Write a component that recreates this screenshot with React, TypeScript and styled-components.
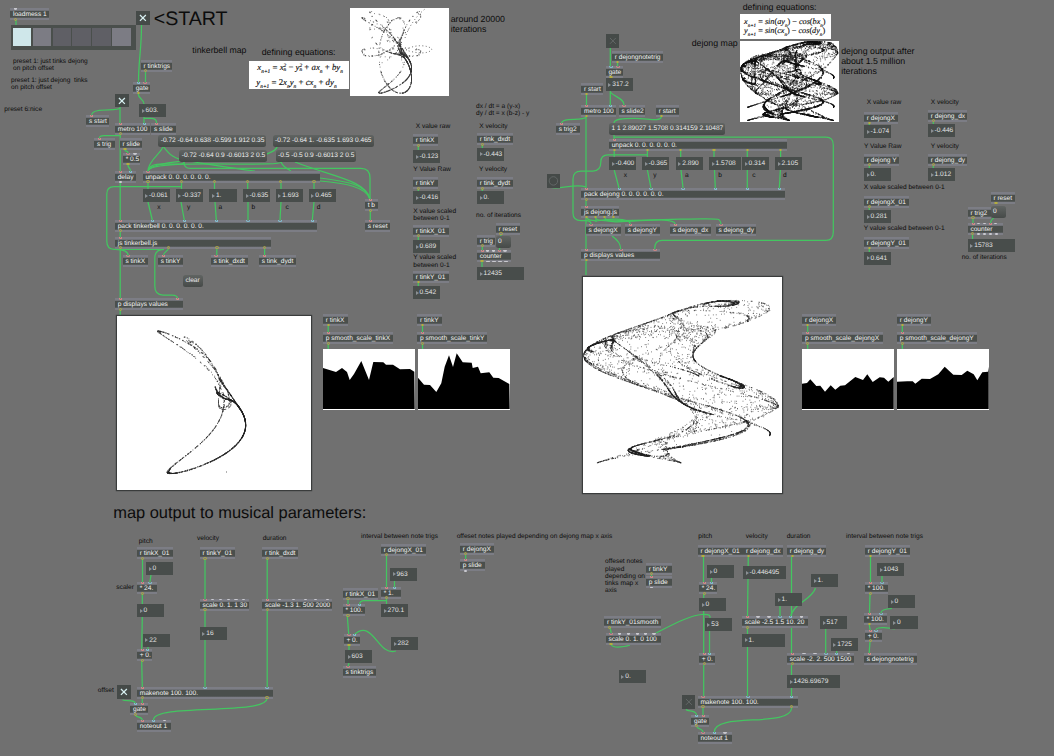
import React from "react";
import styled, { createGlobalStyle } from "styled-components";

const GlobalStyle = createGlobalStyle`
  html, body { margin: 0; padding: 0; background: #707070; }
  body { overflow: hidden; }
  * { box-sizing: border-box; }
`;

/* ---------- parts of the patcher ---------- */

const Patcher = styled.main`
  position: relative;
  width: 1054px;
  height: 756px;
  overflow: hidden;
  background: #707070;
  font-family: "Liberation Sans", Arial, sans-serif;
  font-size: 6.6px;
  text-rendering: geometricPrecision;
  white-space: pre;
`;

const Cables = styled.svg`
  position: absolute;
  inset: 0;
  fill: none;
  stroke: #43c660;
  stroke-width: 1.25;
`;

type Place = { $x: number; $y: number; $w?: number };

const ObjectBox = styled.div<Place>`
  position: absolute;
  left: ${(p) => p.$x}px;
  top: ${(p) => p.$y}px;
  width: ${(p) => p.$w}px;
  height: 12px;
  padding-left: 2.7px;
  line-height: 13.2px;
  color: #f2f2f2;
  background: linear-gradient(#7c7d85 0 2.4px, #4a4f4c 2.8px 9.4px, #7c7d85 9.8px);
`;

const portColors: Record<string, string> = {
  r: "#d98a86",
  b: "#84c4d6",
  w: "#c9c9cf",
  y: "#b4ad3e",
};

const Port = styled.i<{ $dx: number; $kind: string; $out?: boolean }>`
  position: absolute;
  left: ${(p) => p.$dx - 1.6}px;
  ${(p) => (p.$out ? "bottom: -0.4px;" : "top: 0;")}
  width: 3.2px;
  height: ${(p) => (p.$kind === "w" ? 1.6 : p.$out ? 2.8 : 2)}px;
  border: ${(p) => (p.$kind === "w" ? "none" : `0.9px solid ${portColors[p.$kind]}`)};
  background: ${(p) => (p.$kind === "w" ? portColors.w : "transparent")};
  border-radius: ${(p) => (p.$out ? "2px" : "0 0 2px 2px")};
  ${(p) => (!p.$out && p.$kind !== "w" ? "border-top: none;" : "")}
`;

const NumberBox = styled.div<Place>`
  position: absolute;
  left: ${(p) => p.$x}px;
  top: ${(p) => p.$y}px;
  width: ${(p) => p.$w}px;
  height: 13px;
  display: flex;
  align-items: center;
  gap: 1px;
  padding-left: 2.6px;
  color: #e4e4e4;
  background: #484d4b;
`;

const Arrow = styled.span`
  width: 0;
  height: 0;
  border: 2.2px solid transparent;
  border-left: 3px solid #8b9094;
  border-right: 0;
`;

const MessageBox = styled.div<Place>`
  position: absolute;
  left: ${(p) => p.$x}px;
  top: ${(p) => p.$y}px;
  width: ${(p) => p.$w}px;
  height: 12px;
  padding-left: 2.4px;
  line-height: 12px;
  color: #f0f0f0;
  border-radius: 2.5px;
  background: linear-gradient(#606462, #464a48);
`;

const Comment = styled.div<Place & { $size: number; $lh: number }>`
  position: absolute;
  left: ${(p) => p.$x}px;
  top: ${(p) => p.$y - p.$lh / 2}px;
  font-size: ${(p) => p.$size}px;
  line-height: ${(p) => p.$lh}px;
  color: #0c0c0c;
`;

const ToggleBox = styled.div<Place & { $on?: boolean }>`
  position: absolute;
  left: ${(p) => p.$x}px;
  top: ${(p) => p.$y}px;
  width: 13.8px;
  height: 13.8px;
  background: #454a48;
  svg {
    display: block;
    width: 100%;
    height: 100%;
    fill: none;
    stroke: ${(p) => (p.$on ? "#d8f0f2" : "#626766")};
    stroke-width: ${(p) => (p.$on ? 1.3 : 1)};
  }
`;

const PresetPanel = styled.div`
  position: absolute;
  left: 10.6px;
  top: 25px;
  width: 125.4px;
  height: 24.5px;
  display: flex;
  gap: 1.4px;
  padding: 2.5px 2.2px;
  background: #4a4f4c;
`;

const PresetCell = styled.span<{ $c: string }>`
  width: 18.5px;
  height: 18.8px;
  background: ${(p) => p.$c};
`;

const Screen = styled.div<Place & { $h: number; $frame?: boolean }>`
  position: absolute;
  left: ${(p) => p.$x}px;
  top: ${(p) => p.$y}px;
  width: ${(p) => p.$w}px;
  height: ${(p) => p.$h}px;
  background: #fff;
  box-shadow: ${(p) => (p.$frame ? "0 0 0 1.2px #3a3c3c" : "none")};
  svg { display: block; }
`;

const Formula = styled.div<Place & { $h: number; $size: number; $gap: number }>`
  position: absolute;
  left: ${(p) => p.$x}px;
  top: ${(p) => p.$y}px;
  width: ${(p) => p.$w}px;
  height: ${(p) => p.$h}px;
  display: flex;
  flex-direction: column;
  justify-content: center;
  gap: ${(p) => p.$gap}px;
  background: #fff;
  color: #111;
  font-family: "Liberation Serif", "Times New Roman", serif;
  font-style: italic;
  font-size: ${(p) => p.$size}px;
  line-height: 1;
  -webkit-text-stroke: 0.15px #111;
  sub { font-size: 0.62em; line-height: 0; }
  b { font-weight: normal; font-style: normal; }
`;

const FormulaLine = styled.div<{ $x: number }>`
  height: 1em;
  padding-left: ${(p) => p.$x}px;
`;

const Power = styled.span`
  display: inline-grid;
  height: 1em;
  font-size: 0.6em;
  line-height: 0.9;
  vertical-align: 0.7em;
`;

/* ---------- patch data ---------- */

type Obj = [number, number, number, string, string?, string?];

const objects: Obj[] = [
  [10.3, 8.3, 38.7, "loadmess 1", "w5.5", "y5.5"],
  [140.7, 59.7, 31.3, "r tinktrigs", "", "y5"],
  [133, 82, 17, "gate", "b5.3 r12", "y5.3"],
  [86.3, 114.7, 22.7, "s start", "r5.3"],
  [115, 122.7, 35, "metro 100", "r5.3 b29.3", "y5.3"],
  [151.3, 122.7, 25, "s slide", "r5.3"],
  [94.3, 137.5, 20.7, "s trig", "r5"],
  [119.7, 138, 22.3, "r slide", "", "y5.3"],
  [123, 153, 17, "* 0.5", "r5 w12", "y5"],
  [115, 170.7, 20.7, "delay", "r5.3 b15.5", "w5.3"],
  [142.7, 170.7, 177.5, "unpack 0. 0. 0. 0. 0. 0.", "r5.3", "y5.3 y38.7 y71.8 y104.8 y138 y171.3"],
  [115, 219.7, 202, "pack tinkerbell 0. 0. 0. 0. 0. 0.", "r5.3 b37.3 b69.3 b101.3 b133 b165 b197.3", "y5.3"],
  [115, 236.5, 156, "js tinkerbell.js", "r5.3", "y5.3 y53.7 y102 y149.7"],
  [122.7, 255.3, 25, "s tinkX", "r5.3"],
  [158, 255.3, 25, "s tinkY", "r5.3"],
  [210.7, 255.3, 37, "s tink_dxdt", "r5.3"],
  [259, 255.3, 37, "s tink_dydt", "r5.3"],
  [115, 298.2, 68, "p displays values", "r5.3 r62.7", "y5.3"],
  [365, 199.3, 13, "t b", "r5.3", "y5.3"],
  [365, 220, 25, "s reset", "r5.3"],
  [413, 134.2, 25, "r tinkX", "", "y5.3"],
  [477, 133.2, 36, "r tink_dxdt", "", "y5.3"],
  [413, 177.2, 25, "r tinkY", "", "y5.3"],
  [477, 177.2, 36, "r tink_dydt", "", "y5.3"],
  [413, 224.7, 36, "r tinkX_01", "", "y5.3"],
  [413, 271, 36, "r tinkY_01", "", "y5.3"],
  [495.7, 222.7, 24, "r reset", "", "y5.3"],
  [477, 234.7, 17.5, "r trig", "", "y5.3"],
  [477, 250, 34, "counter", "r5.7 w10.5 w16.5 r22.5 w28", "y5 w11 w17 w23 w29"],
  [612, 51, 51, "r dejongnotetrig", "", "y5.3"],
  [605.7, 66, 17, "gate", "b5.3 r12.3", "y5.3"],
  [581.3, 83, 22, "r start", "", "y5.3"],
  [581.3, 105, 35, "metro 100", "r5.3 b29.3", "y5.3"],
  [618.7, 105, 26.7, "s slide2", "r5.3"],
  [656, 105, 23, "r start", "", "y5.3"],
  [556, 123.3, 24, "s trig2", "r5.3"],
  [609, 139, 178, "unpack 0. 0. 0. 0. 0. 0.", "r5.3", "y5.3 y38.5 y71.8 y105 y138.3 y171.7"],
  [581.3, 188.3, 203.3, "pack dejong 0. 0. 0. 0. 0. 0.", "r5.3 b38 b69.7 b101.7 b134 b166 b198", "y5.3"],
  [581.3, 206, 37.3, "js dejong.js", "r5.3", "y5.3 y14.4 y23.5 y32.6"],
  [585.7, 223.7, 35, "s dejongX", "r5.3"],
  [625, 223.7, 35, "s dejongY", "r5.3"],
  [670, 223.7, 40.5, "s dejong_dx", "r5.3"],
  [715.7, 223.7, 40, "s dejong_dy", "r5.3"],
  [581.3, 249, 79, "p displays values", "r5.3 r39.7 r73.7", "y5.3"],
  [864, 112, 34, "r dejongX", "", "y5.3"],
  [928, 109.5, 38.7, "r dejong_dx", "", "y5.3"],
  [864, 153.7, 35, "r dejong Y", "", "y5.3"],
  [928, 153.7, 38.7, "r dejong_dy", "", "y5.3"],
  [864, 195.5, 45, "r dejongX_01", "", "y5.3"],
  [864, 237, 45, "r dejongY_01", "", "y5.3"],
  [990.7, 192, 24, "r reset", "", "y5.3"],
  [967.7, 206.5, 23, "r trig2", "", "y5.3"],
  [967.7, 222.7, 35, "counter", "r5.7 w10.5 w16.5 r22.5 w28", "y5 w11 w17 w23 w29"],
  [323, 314, 25, "r tinkX", "", "y5.3"],
  [323, 332.3, 70, "p smooth_scale_tinkX", "r5.3", "y5.3"],
  [417.3, 314, 25, "r tinkY", "", "y5.3"],
  [417.3, 332.3, 70, "p smooth_scale_tinkY", "r5.3", "y5.3"],
  [802.3, 314, 34, "r dejongX", "", "y5.3"],
  [802.3, 332.3, 81, "p smooth_scale_dejongX", "r5.3", "y5.3"],
  [897, 314, 34, "r dejongY", "", "y5.3"],
  [897, 332.3, 80, "p smooth_scale_dejongY", "r5.3", "y5.3"],
  [137, 547.2, 36, "r tinkX_01", "", "y5.3"],
  [199.7, 547.2, 35, "r tinkY_01", "", "y5.3"],
  [262.3, 547.2, 36, "r tink_dxdt", "", "y5.3"],
  [137, 582.4, 19.7, "* 24.", "r5.3 b13", "y5.3"],
  [137, 649.4, 15, "+ 0.", "r5.3 b10.7", "y5.3"],
  [199.7, 598.8, 49, "scale 0. 1. 1 30", "r5.3 w13 w21 w28.5 w36.3 w44", "y5.3"],
  [262.3, 598.8, 70, "scale -1.3 1. 500 2000", "r5.3 w17.4 w31 w43 w53 w65", "y5.3"],
  [137, 686.8, 136, "makenote 100. 100.", "r5.3 b68 b130", "y5.3 y130"],
  [130.3, 703.3, 17.3, "gate", "b5.3 r12.4", "y5.3"],
  [137, 719.6, 33.7, "noteout 1", "r5.3 b16.6 w27.4", ""],
  [381, 543.6, 45, "r dejongX_01", "", "y5.3"],
  [381, 586.8, 19.7, "* 1.", "r5.3 b13.8", "y5.3"],
  [342.7, 587.8, 35, "r tinkX_01", "", "y5.3"],
  [342.7, 604.2, 22.7, "* 100.", "r5.3 b17", "y5.3"],
  [343.7, 634, 16.3, "+ 0.", "r5.3 b10.7", "y5.3"],
  [342.7, 665.9, 33, "s tinktrigs", "r5.3", ""],
  [460, 542.8, 34, "r dejongX", "", "y5.3"],
  [460, 559.3, 25.3, "p slide", "r5.3", "w5.3"],
  [646, 562.6, 25.5, "r tinkY", "", "y5.3"],
  [646, 575.8, 25.5, "p slide", "r5.3", "w5.3"],
  [604.3, 616.4, 57, "r tinkY_01smooth", "", "y5.3"],
  [605.7, 633, 55, "scale 0. 1. 0 100", "r5.3 w14 w22.7 w31.5 w40 w48.3", "y5.3"],
  [697.7, 545, 46, "r dejongX_01", "", "y5.3"],
  [743.3, 545, 39.3, "r dejong_dx", "", "y5.3"],
  [787, 545, 38.7, "r dejong_dy", "", "y5.3"],
  [865, 545, 45, "r dejongY_01", "", "y5.3"],
  [699, 582.3, 18, "* 24.", "r5.3 b12.7", "y5.3"],
  [699, 652.8, 15.7, "+ 0.", "r5.3 b10.7", "y5.3"],
  [742, 616.3, 66, "scale -2.5 1.5 10. 20", "r5.3 w16 w27 b38 b48.7 w59.3", "y5.3"],
  [787, 652.8, 67, "scale -2. 2. 500 1500", "r5.3 w17 w28 b39 b49.7 w61.5", "y5.3"],
  [865, 582.3, 23, "* 100.", "r5.3 b17", "y5.3"],
  [864, 613, 23, "* 100.", "r5.3 b17", "y5.3"],
  [865, 629.6, 16.7, "+ 0.", "r5.3 b11", "y5.3"],
  [864, 652.8, 52.7, "s dejongnotetrig", "r5.3", ""],
  [697.7, 695.9, 100, "makenote 100. 100.", "r5.3 b50.3 b94", "y5.3 y94"],
  [691.3, 714.5, 17.5, "gate", "b5.3 r12.4", "y5.3"],
  [697.7, 732, 34, "noteout 1", "r5.3 b16.6 w27.4", ""],
];

const numbers: [number, number, string, number?][] = [
  [139, 104.3, "603."],
  [142.5, 189, "-0.061"], [175.7, 189, "-0.337"], [209.3, 189, "1."],
  [243, 189, "-0.635"], [275.7, 189, "1.693"], [308.7, 189, "0.465"],
  [413, 150, "-0.123"], [477, 147.6, "-0.443"], [413, 191.4, "-0.416"], [477, 191.4, "0."],
  [413, 240, "0.689"], [413, 286, "0.542"], [477, 267, "12435", 47],
  [605.7, 78.3, "317.2"],
  [609, 157.2, "-0.400"], [642, 157.2, "-0.365"], [675.7, 157.2, "2.890"],
  [709, 157.2, "1.5708", 31.5], [742, 157.2, "0.314"], [775, 157.2, "2.105"],
  [864, 125.4, "-1.074"], [928, 124, "-0.446"], [864, 168, "0."], [928, 168, "1.012"],
  [864, 210, "0.281"], [864, 251.8, "0.641"], [967.7, 239, "15783", 47],
  [146, 562, "0"], [137, 604, "0"], [142.7, 633.7, "22"], [199.7, 627, "16"],
  [390, 567.5, "963"], [381, 604, "270.1"], [391, 637, "282"], [345, 650, "603"],
  [618.7, 670, "0."],
  [707, 565, "0"], [743, 566, "-0.446495", 43], [877, 563, "1043"], [699, 598, "0"],
  [811, 574, "1."], [775, 593, "1."], [704.7, 618, "53"], [742, 633.7, "1.", 43],
  [820, 616, "517"], [830.7, 638, "1725"], [787, 675.3, "1426.69679", 53],
  [888, 595.3, "0"], [890.3, 616, "0"],
];

const messages: [number, number, number, string][] = [
  [158.3, 134.7, 108, "-0.72 -0.64 0.638 -0.599 1.912 0.35"],
  [272.7, 134.7, 101, "-0.72 -0.64 1. -0.635 1.693 0.465"],
  [179.3, 150.3, 88, "-0.72 -0.64 0.9 -0.6013 2 0.5"],
  [275.7, 150.3, 80.3, "-0.5 -0.5 0.9 -0.6013 2 0.5"],
  [183, 275.3, 19.7, "clear"],
  [495.7, 235.8, 15, "0"],
  [609, 122.7, 116.3, "1 1 2.89027 1.5708 0.314159 2.10487"],
  [990.7, 206.4, 15.3, "0"],
];

/* x, centre of the first line, text, font size, line height */
const comments: [number, number, string, number?, number?][] = [
  [13, 61.3, "preset 1: just tinks dejong\non pitch offset"],
  [11, 80.2, "preset 1: just dejong  tinks\non pitch offset"],
  [4.3, 109.6, "preset 6:nice"],
  [153.7, 19.3, "<START", 19.6, 22],
  [192.3, 50, "tinkerbell map", 8.7, 10],
  [261.7, 52, "defining equations:", 8.8, 10],
  [450.7, 19.2, "around 20000\niterations", 8.8, 10],
  [476, 106.3, "dx / dt = a (y-x)\ndy / dt = x (b-z) - y"],
  [415.7, 126.2, "X value raw"], [479.3, 126.2, "X velocity"],
  [413.3, 169.2, "Y Value Raw"], [479, 169.2, "Y velocity"],
  [413.3, 211.8, "X value scaled\nbetween 0-1"],
  [476, 215.3, "no. of iterations"],
  [413.3, 258, "Y value scaled\nbetween 0-1"],
  [157.3, 207.5, "x"], [187, 207.5, "y"], [218.5, 207.5, "a"], [251.5, 207.5, "b"], [285.5, 207.5, "c"], [316.7, 207.5, "d"],
  [742.7, 7, "defining equations:", 8.8, 10],
  [691.7, 42.5, "dejong map", 8.8, 10],
  [841.2, 51.2, "dejong output after\nabout 1.5 million\niterations", 8.8, 10],
  [623.7, 175.7, "x"], [653.3, 175.7, "y"], [685, 175.7, "a"], [718.2, 175.7, "b"], [752.2, 175.7, "c"], [783, 175.7, "d"],
  [866.7, 102.2, "X value raw"], [930.7, 102.2, "X velocity"],
  [864, 146.2, "Y Value Raw"], [930.7, 146.2, "Y velocity"],
  [863.7, 188, "X value scaled between 0-1"],
  [863.7, 228.5, "Y value scaled between 0-1"],
  [961.7, 257.4, "no. of iterations"],
  [113.2, 513, "map output to musical parameters:", 16.45, 20],
  [138.7, 542, "pitch"], [197, 538.8, "velocity"], [262.7, 538.8, "duration"],
  [116.3, 587.2, "scaler"], [97.8, 690.5, "offset"],
  [361, 536.3, "interval between note trigs"],
  [456.7, 536.3, "offeset notes played depending on dejong map x axis"],
  [605, 562, "offeset notes\nplayed\ndepending on\ntinks map x\naxis"],
  [698.3, 536.3, "pitch"], [745.7, 536.3, "velocity"], [786.7, 536.3, "duration"],
  [846, 536.3, "interval between note trigs"],
];

const cables = [
  "M16 20V25",
  "M141.5 25C141.5 50 138.5 60 138.5 82", "M145.5 71.5V82",
  "M138.3 94C138.3 99 144 99 144 104", "M144 117V123", "M144 118.3H151Q156.6 118.3 156.6 123",
  "M120 107V123", "M120 108C118 112 92 107 91.7 115",
  "M120.2 134V299", "M120 135.7H104Q99.4 135.7 99.4 138",
  "M125 150C125 152 128 150 128 153", "M128 165C128 168 130.5 168 130.5 171",
  "M163 146C163 152 148 160 148 171", "M163 146C172 158 176 158 182 160C220 166 230 168 255 171",
  "M320 178C345 181 366 184 370 199", "M320 181C345 183 366 187 370 199",
  "M184 162C184 168 150 158 148 171", "M184 162Q184 168.4 190 168.4H361Q370 168.4 370 178V200",
  "M277.5 146C276 152 268 153 262 156C230 160 152 158 148 171",
  "M281 162C281 168 150 158 148 171", "M281 162C283 167 287 169 291 171",
  "M295 162C330 176 366 180 370 199",
  "M148 182V189", "M181.5 182V189", "M214.5 182V189", "M247.7 182V189", "M281 182V189", "M314 182V189",
  "M148 202L152.3 220", "M181 202L184.3 220", "M215 202L216.3 220", "M248 202V220", "M281 202L280 220", "M314 202L312.3 220",
  "M181.5 186.7H114Q106.8 186.7 106.8 194V241Q106.8 249.3 114 249.3H164",
  "M115 249.3C123 249.3 128.3 251 128.3 256",
  "M168.7 248C168 252 163.3 251 163.3 256",
  "M164 249.3Q154.8 249.3 154.8 258V286Q154.8 295 163 295H172Q177.7 295 177.7 299",
  "M216.8 248V256", "M264.6 248V256", "M120.2 310V315", "M370.3 211V221",
  "M418.3 146V150", "M482.3 145V148", "M418.3 189V192", "M482.3 189V192", "M418.3 236V240", "M418.3 283V286",
  "M482.3 246V250", "M482 262V267", "M501 234L499.5 250",
  "M610.3 48V66", "M617.5 63V66", "M610.5 78V79", "M610.3 91V105", "M610.3 92C614 97 624 98 624 105",
  "M586.5 95V105", "M586.3 117C582 122 561.5 116 561.3 124", "M586 117V275",
  "M551 187.5C560 190 575 183 586 187",
  "M661.3 117C660 122 648 118.3 635 118.3S614 119 614 123",
  "M614 134.7V139", "M614 137H826Q833.3 137 833.3 145V232Q833.3 240.4 826 240.4H662Q654.6 240.4 654.6 249",
  "M614.2 151V157", "M647.4 151V157", "M680.7 151V157", "M714 151V157", "M747.3 151V157", "M780.6 151V157",
  "M614.2 170L619 188", "M647.4 170L651 188", "M681 170L683 188", "M714.5 170L715.3 188", "M747.3 170V188", "M780.4 170L779.3 188",
  "M647.4 154.8H608Q600.8 154.8 600.8 162Q600.8 171 593 171H581Q573 171 573 179V213Q573 220.6 581 220.6H586Q591 220.6 591 224",
  "M587 218C588 221 593 220 596 221C606 219 629 217 630.5 224",
  "M595.7 218C597 226 674 214 675.3 224", "M605 218C607 226 640 219 680 219S720 217 721 224",
  "M596 218V222", "M612 236Q620.7 242 620.7 249",
  "M869.3 123V126", "M933.3 121V124", "M869.3 165V168", "M933.3 165V168", "M869.3 207V210", "M869.3 249V252",
  "M973 218V223", "M972.5 234V239", "M995.5 217Q991 219 990.5 223",
  "M328.2 325V333", "M328.2 343V349", "M422.5 325V333", "M422.5 343V349",
  "M807.7 325V333", "M807.7 343V349", "M902.3 325V333", "M902.3 343V349",
  "M142.5 558V583", "M151 575L149.7 583", "M142.3 594V604", "M142.3 617L141.7 650", "M148 646V650",
  "M141.7 661L142.3 687", "M142.3 698V704", "M122.5 700C127 701.5 135 699 135.7 704",
  "M135.5 715C136.5 718 142 716 142.3 720", "M267.2 698C267 716 153.5 703 153.5 720",
  "M205 558V687", "M267.2 558V687",
  "M386.5 555V587", "M394.5 580V587", "M386.5 598V604", "M386.5 600.6H364Q359.7 600.6 359.7 604.5",
  "M348 600V605", "M347.3 616L348.7 634", "M396 651C378 657 373 618 354.4 634.5",
  "M349 646V650", "M349 663L348 666.5", "M465.7 554V560", "M651.5 573V576",
  "M610 628L611.3 633", "M611.3 645C614 649 628 646 630 645",
  "M654 634C670 626 690 615 702 614.5S709 618 709.5 620V653",
  "M703.5 556V582", "M711.5 578V583", "M703.7 594V696", "M748.3 556L747.5 617", "M747.5 628V696",
  "M791.5 556V696", "M815.5 588C812 600 792 604 790.8 617", "M780 606V617",
  "M825.7 629V653", "M836.7 651V653",
  "M870.5 556V583", "M882 576V583", "M870 594L869.5 613", "M892 608.5Q881 609 881 613",
  "M869.3 625L870.2 630", "M895 629C890 628 876 626 876 630", "M870 641L869.2 653",
  "M703 708V715", "M686 709.5C688 712 696 709 696.6 715", "M696.6 726C697.6 730 703 728 703.2 732.5",
  "M791.7 708C790 728 714.5 712 714.3 732",
];

/* ---------- generated drawings ---------- */

type Pt = [number, number];
type Step = (x: number, y: number) => Pt;

function dots(points: Pt[], len = 0.8) {
  return points.map(([x, y]) => `M${x.toFixed(1)} ${y.toFixed(1)}h${len}`).join("");
}

/* A lagged orbit pairs each new x with the y of the step before it. */
function orbit(step: Step, start: Pt, count: number, lagged = true): Pt[] {
  let [x, y] = start;
  const out: Pt[] = [];
  for (let i = 0; i < count; i++) {
    const [nx, ny] = step(x, y);
    if (i > 20) out.push([nx, lagged ? y : ny]);
    x = nx;
    y = ny;
  }
  return out;
}

function fit(points: Pt[], left: number, top: number, right: number, bottom: number): Pt[] {
  let x0 = Infinity, x1 = -Infinity, y0 = Infinity, y1 = -Infinity;
  for (const [x, y] of points) {
    x0 = Math.min(x0, x);
    x1 = Math.max(x1, x);
    y0 = Math.min(y0, y);
    y1 = Math.max(y1, y);
  }
  return points.map(([x, y]) => [
    left + ((x - x0) / (x1 - x0)) * (right - left),
    top + ((y - y0) / (y1 - y0)) * (bottom - top),
  ]);
}

const dejong: Step = (x, y) => [
  Math.sin(2.89027 * y) - Math.cos(1.5708 * x),
  Math.sin(0.314159 * x) - Math.cos(2.10487 * y),
];

const tinkerbell = (a: number, b: number, c: number, d: number): Step => (x, y) => [
  x * x - y * y + a * x + b * y,
  2 * x * y + c * x + d * y,
];

const tinkStart: Pt = [-0.72, -0.64];
const wideTink = tinkerbell(0.9, -0.6013, 2, 0.5);

const dejongPath = dots(fit(orbit(dejong, [1, 1], 7200), 0.2, 23.4, 195.2, 185.8));
const tinkPath = dots(fit(orbit(tinkerbell(1, -0.635, 1.693, 0.465), tinkStart, 2000), 40.2, 15, 128.4, 157.6));
const tinkThumbPath =
  dots(fit(orbit(wideTink, tinkStart, 700), 11.5, 3.5, 70.3, 85.3)) +
  dots(fit(orbit(wideTink, tinkStart, 700, false), 11.5, 3.5, 70.3, 85.3));
const dejongThumbPath =
  dots(fit(orbit(dejong, [1, 1], 5200), 0.4, 0.5, 97.5, 79.5)) +
  dots(fit(orbit(dejong, [1, 1], 4200, false), 0.4, 0.5, 97.5, 79.5));

const waves: [number, number, number, string][] = [
  [323, 349, 92, "0,19 13,23 19,19 24,23 26.7,31 31,25 38.3,12 46,31 50.3,13 60.3,13.3 63,15.7 70,15.7 77,20.3 87,20 91.3,22.7"],
  [417.5, 349, 92, "0,28.7 6,35.7 12,36 18.3,43 23.3,34.3 26.7,17.7 31,6.3 35,18 38.7,4.3 44.7,13.3 53.7,13.7 54.7,19 60,17.7 62.7,24.3 71.3,23.3 75.3,28.7 80.7,29 91.3,35"],
  [802.3, 349, 92, "0,34.7 5,34 8.3,30.3 14.3,37 18.3,36.7 23,42.7 28.7,36.3 33.3,40.7 38.3,36.7 43,36.3 53.3,28 61,31 65.3,25.3 70.7,33 77.7,28.3 82,28.7 86.3,32.7 91.7,28"],
  [897, 349, 92, "0,32.7 10.3,32.3 15.7,32.3 18.3,34.7 24.7,29.7 33,30 41.3,25.3 47.7,17.7 56.3,25.7 64.7,26 70.3,21.7 76.7,25.3 80.3,31.3 85.3,23.3 91,22.7 91.7,17.7"],
];

function ports(list: string | undefined, out: boolean) {
  return (list || "")
    .split(" ")
    .filter(Boolean)
    .map((p, i) => <Port key={(out ? "o" : "i") + i} $kind={p[0]} $dx={Number(p.slice(1))} $out={out} />);
}

function Toggle({ x, y, on }: { x: number; y: number; on?: boolean }) {
  return (
    <ToggleBox $x={x} $y={y} $on={on}>
      <svg viewBox="0 0 14 14"><path d="M4 4L10 10M10 4L4 10" /></svg>
    </ToggleBox>
  );
}

const N2 = () => <Power><span>2</span><span>n</span></Power>;
const n = <sub>n</sub>;
const n1 = <sub>n+1</sub>;

export default function App() {
  return (
    <>
      <GlobalStyle />
      <Patcher>
        <Cables width="1054" height="756" viewBox="0 0 1054 756">
          {cables.map((d, i) => <path key={i} d={d} />)}
        </Cables>

        <PresetPanel>
          {["#cfe7ea", "#7c7c84", "#5f5f65", "#5f5f65", "#5f5f65", "#7c7c84"].map((c, i) => (
            <PresetCell key={i} $c={c} />
          ))}
        </PresetPanel>

        <Toggle x={136} y={11} on />
        <Toggle x={115} y={93.6} on />
        <Toggle x={117.2} y={685.2} on />
        <Toggle x={605.5} y={34} />
        <Toggle x={681.7} y={695.2} />
        <ToggleBox $x={546.6} $y={174}>
          <svg viewBox="0 0 14 14"><circle cx="6.5" cy="7" r="4.3" /></svg>
        </ToggleBox>

        {objects.map(([x, y, w, text, ins, outs], i) => (
          <ObjectBox key={i} $x={x} $y={y} $w={w}>
            {ports(ins, false)}
            {ports(outs, true)}
            {text}
          </ObjectBox>
        ))}
        {messages.map(([x, y, w, text], i) => (
          <MessageBox key={i} $x={x} $y={y} $w={w}>{text}</MessageBox>
        ))}
        {numbers.map(([x, y, text, w = 27.3], i) => (
          <NumberBox key={i} $x={x} $y={y} $w={w}><Arrow />{text}</NumberBox>
        ))}
        {comments.map(([x, y, text, size = 6.6, lh = 7.15], i) => (
          <Comment key={i} $x={x} $y={y} $size={size} $lh={lh}>{text}</Comment>
        ))}

        <Formula $x={249.3} $y={60.7} $w={99.4} $h={28.3} $size={8.8} $gap={5.4}>
          <FormulaLine $x={8}>x{n1}<b> = </b>x<N2 /><b> − </b>y<N2 /><b> + </b>ax{n}<b> + </b>by{n}</FormulaLine>
          <FormulaLine $x={7}>y{n1}<b> = 2</b>x{n}y{n}<b> + </b>cx{n}<b> + </b>dy{n}</FormulaLine>
        </Formula>
        <Formula $x={740} $y={13.8} $w={90.7} $h={25.6} $size={8.2} $gap={1.6}>
          <FormulaLine $x={4}>x{n1}<b> = </b>sin<b>(</b>ay{n}<b>) − </b>cos<b>(</b>bx{n}<b>)</b></FormulaLine>
          <FormulaLine $x={4}>y{n1}<b> = </b>sin<b>(</b>cx{n}<b>) − </b>cos<b>(</b>dy{n}<b>)</b></FormulaLine>
        </Formula>

        <Screen $x={349.5} $y={8} $w={99.3} $h={88.3}>
          <svg width="99.3" height="88.3" fill="none" stroke="#333" strokeWidth="0.7">
            <path d={tinkThumbPath} />
            <path d="M56 42C64 36 78 37 82 41C79 47 64 45 56 42M55 30C58 20 66 8 75 1" strokeDasharray="1 2.4" />
          </svg>
        </Screen>

        <Screen $x={740.3} $y={41} $w={98.8} $h={80.5}>
          <svg width="98.8" height="80.5" fill="none" stroke="#111" strokeWidth="0.8">
            <path d={dejongThumbPath} />
          </svg>
        </Screen>

        <Screen $x={117} $y={316.3} $w={193.6} $h={174.2} $frame>
          <svg width="193.6" height="174.2" fill="none" stroke="#222" strokeWidth="0.7">
            <path d={tinkPath} />
            <path d="M109 156h1" />
          </svg>
        </Screen>

        <Screen $x={583} $y={276.5} $w={199.3} $h={216} $frame>
          <svg width="199.3" height="216" fill="none" stroke="#222" strokeWidth="0.7">
            <path d={dejongPath} />
          </svg>
        </Screen>

        {waves.map(([x, y, w, pts], i) => (
          <Screen key={i} $x={x} $y={y} $w={w} $h={60.5}>
            <svg width={w} height="60.5"><polygon points={`0,60 ${pts} 91.7,60`} /></svg>
          </Screen>
        ))}
      </Patcher>
    </>
  );
}
